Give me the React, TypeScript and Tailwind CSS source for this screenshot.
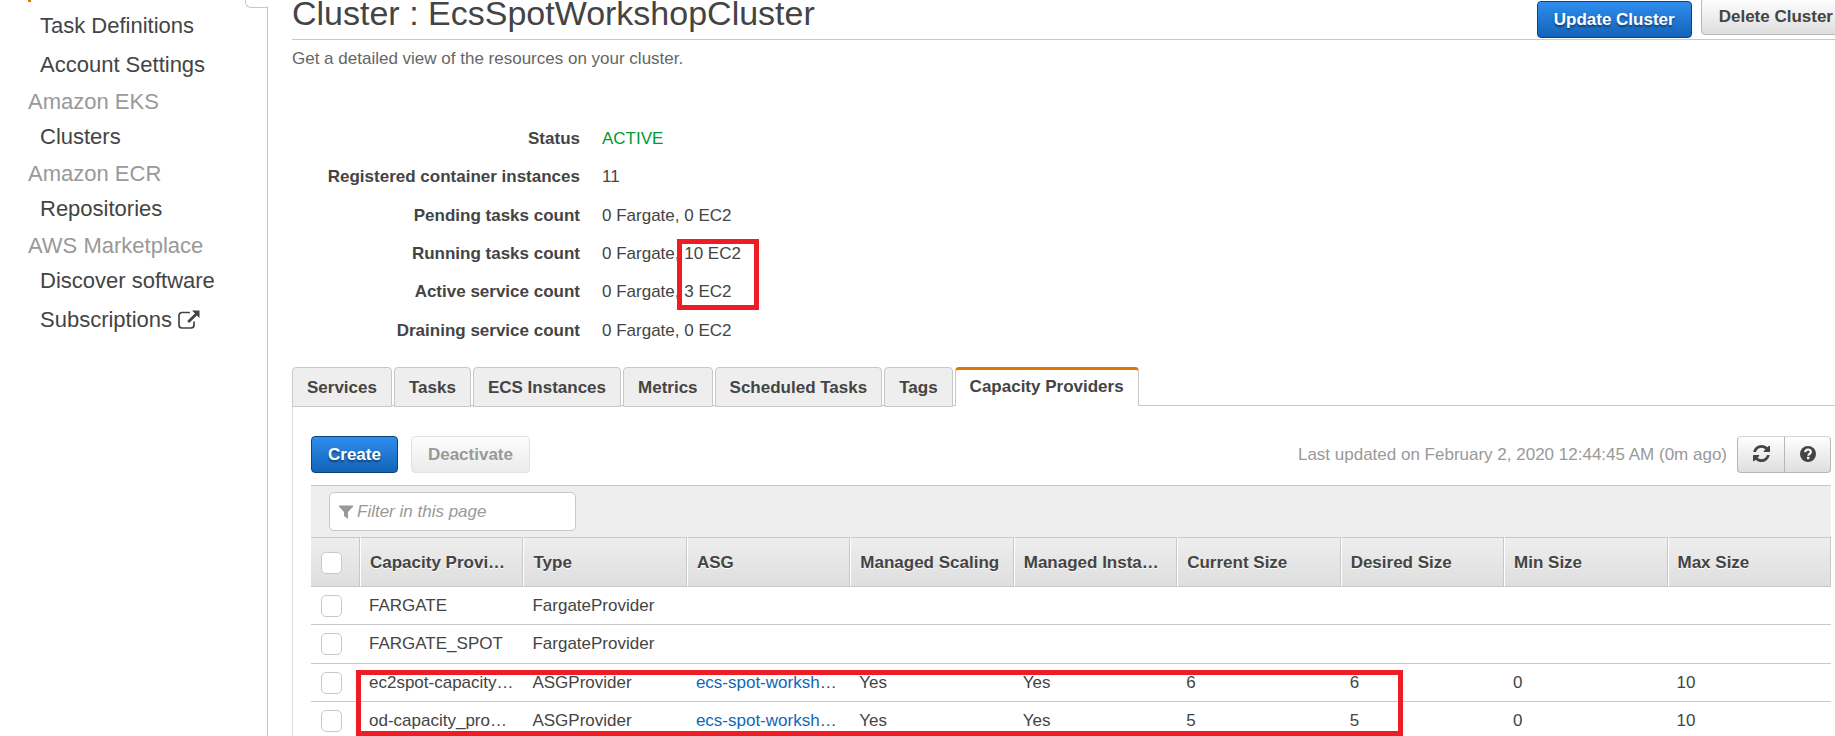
import React from "react";

const primaryButton =
  "h-[37px] rounded-[4px] border border-[#0e4379] bg-linear-to-b from-[#2f8dee] to-[#1264b8] px-4 text-[17px] leading-[20px] font-bold text-white [text-shadow:0_2px_2px_rgba(0,0,0,0.45)]";
const iconButton =
  "flex h-[37px] w-[47px] items-center justify-center border border-[#b7b7b7] border-t-[#d5d5d5] bg-linear-to-b from-white to-[#dedede] pb-[2px] text-[#444]";
const checkbox =
  "block h-[22px] w-[21px] appearance-none rounded-[5px] border border-[#c8c8c8] bg-white checked:bg-[#2f8dee]";

function RefreshIcon() {
  return (
    <svg viewBox="0 128 1536 1536" className="size-[17px]" fill="currentColor" aria-hidden="true">
      <path d="M1511 1056q0 5-1 7-64 268-268 434.500t-478 166.500q-146 0-282.500-55t-243.500-157l-129 129q-19 19-45 19t-45-19-19-45v-448q0-26 19-45t45-19h448q26 0 45 19t19 45-19 45l-137 137q71 66 161 102t187 36q134 0 250-65t186-179q11-17 53-117 8-23 30-23h192q13 0 22.500 9.500t9.500 22.500zm25-800v448q0 26-19 45t-45 19h-448q-26 0-45-19t-19-45 19-45l138-138q-148-137-349-137-134 0-250 65t-186 179q-11 17-53 117-8 23-30 23h-199q-13 0-22.500-9.500t-9.500-22.500v-7q65-268 270-434.500t480-166.500q146 0 284 55.500t245 156.500l130-129q19-19 45-19t45 19 19 45z" />
    </svg>
  );
}

function HelpIcon() {
  return (
    <svg viewBox="0 0 16 16" className="size-4" aria-hidden="true">
      <circle cx="8" cy="8" r="8" fill="currentColor" />
      <path d="M5.200 6.200C5.400 4.300 6.600 3.500 8 3.500c1.600 0 2.800.9 2.800 2.400 0 1.900-2.300 1.900-2.500 3.800" fill="none" stroke="#fff" strokeWidth="2.200" />
      <rect x="7" y="10.800" width="2.400" height="2.300" fill="#fff" />
    </svg>
  );
}

function FilterIcon() {
  return (
    <svg viewBox="0 0 14 14" className="h-[14px] w-[14px] shrink-0" fill="#999" aria-hidden="true">
      <path d="M0 0.500h14v1.200L9 7v7L5 11V7L0 1.700z" />
    </svg>
  );
}

function ExternalIcon() {
  return (
    <svg viewBox="0 0 22 19" className="h-[19px] w-[22px]" aria-hidden="true">
      <path d="M12 2.500H4A3 3 0 0 0 1 5.500V15a3 3 0 0 0 3 3h9a3 3 0 0 0 3-3v-3.500" fill="none" stroke="#444" strokeWidth="1.700" />
      <path d="M14 .5h7.500V8l-2.600-2.600-7.700 7.700-2-2 7.700-7.700z" fill="#444" />
    </svg>
  );
}

function NavLink({ children }: { children: React.ReactNode }) {
  return (
    <a href="#" className="flex h-[39px] items-center gap-[6px] pl-3">
      {children}
    </a>
  );
}

function NavHeading({ children }: { children: React.ReactNode }) {
  return <h2 className="flex h-[33px] items-center pt-[3px] text-[#999]">{children}</h2>;
}

const details = [
  ["Status", "ACTIVE"],
  ["Registered container instances", "11"],
  ["Pending tasks count", "0 Fargate, 0 EC2"],
  ["Running tasks count", "0 Fargate, 10 EC2"],
  ["Active service count", "0 Fargate, 3 EC2"],
  ["Draining service count", "0 Fargate, 0 EC2"],
];

const tabs = ["Services", "Tasks", "ECS Instances", "Metrics", "Scheduled Tasks", "Tags", "Capacity Providers"];

const columns = [
  "Capacity Provider",
  "Type",
  "ASG",
  "Managed Scaling",
  "Managed Instance Protection",
  "Current Size",
  "Desired Size",
  "Min Size",
  "Max Size",
];

const rows = [
  ["FARGATE", "FargateProvider", "", "", "", "", "", "", ""],
  ["FARGATE_SPOT", "FargateProvider", "", "", "", "", "", "", ""],
  ["ec2spot-capacity_provider", "ASGProvider", "ecs-spot-workshop-asg-spot", "Yes", "Yes", "6", "6", "0", "10"],
  ["od-capacity_provider", "ASGProvider", "ecs-spot-workshop-asg-od", "Yes", "Yes", "5", "5", "0", "10"],
];

export default function App() {
  return (
    <div className="flex h-screen overflow-hidden bg-white font-['Liberation_Sans',Arial,sans-serif] text-[17px] leading-[20px] text-[#444]">
      <aside className="w-[268px] shrink-0">
        <div className="flex h-[7px] items-start justify-between pl-7">
          <span className="h-[2px] w-[3px] bg-[#e07700]" />
          <span className="h-[8px] w-[23px] rounded-bl-[6px] border-b border-l border-[#c8c8c8]" />
        </div>
        <nav className="h-full border-r border-[#c8c8c8] pl-7 text-[22px] leading-[26px]">
          <div className="-mt-px">
            <NavLink>Task Definitions</NavLink>
            <NavLink>Account Settings</NavLink>
            <NavHeading>Amazon EKS</NavHeading>
            <NavLink>Clusters</NavLink>
            <NavHeading>Amazon ECR</NavHeading>
            <NavLink>Repositories</NavLink>
            <NavHeading>AWS Marketplace</NavHeading>
            <NavLink>Discover software</NavLink>
            <NavLink>
              Subscriptions <ExternalIcon />
            </NavLink>
          </div>
        </nav>
      </aside>

      <main className="min-w-0 flex-1 pl-6">
        <header className="flex h-10 items-start justify-between border-b border-[#c8c8c8]">
          <h1 className="-mt-[6px] text-[34px] leading-[38px]">Cluster : EcsSpotWorkshopCluster</h1>
          <div className="-mr-4 flex items-start gap-[9px] pt-px">
            <button className={primaryButton}>Update Cluster</button>
            <button className="-mt-[3px] h-[37px] rounded-[4px] border border-[#b7b7b7] bg-linear-to-b from-white to-[#dedede] px-[17px] font-bold">
              Delete Cluster
            </button>
          </div>
        </header>
        <p className="mt-[9px] text-[#666]">Get a detailed view of the resources on your cluster.</p>

        <div className="relative mt-[51px]">
          <dl className="grid h-[230px] auto-rows-fr">
            {details.map(([label, value]) => (
              <div key={label} className="grid grid-cols-[288px_1fr] items-center gap-x-[22px]">
                <dt className="text-right font-bold">{label}</dt>
                <dd className={value === "ACTIVE" ? "text-[#093]" : ""}>{value}</dd>
              </div>
            ))}
          </dl>
          <div className="pointer-events-none absolute top-[119px] left-[385px] h-[71px] w-[82px] border-5 border-[#ee1c25]" />
        </div>

        <div className="mt-[17px] flex h-[39px] items-start gap-[2px] border-b border-[#c8c8c8]" role="tablist">
          {tabs.map((tab) =>
            tab === "Capacity Providers" ? (
              <button key={tab} role="tab" aria-selected="true" className="h-[39px] rounded-t-[4px] border-x border-t-3 border-x-[#c8c8c8] border-t-[#e07700] bg-white px-[14px] pb-[2px] font-bold">
                {tab}
              </button>
            ) : (
              <button key={tab} role="tab" aria-selected="false" className="h-10 rounded-t-[4px] border border-[#c8c8c8] bg-[#eee] px-[14px] pt-[2px] font-bold">
                {tab}
              </button>
            ),
          )}
        </div>

        <section className="border-l border-[#dcdcdc] pt-[30px] pr-1 pl-[18px]">
          <div className="flex items-center">
            <button className={primaryButton}>Create</button>
            <button disabled className="ml-[13px] h-[37px] rounded-[4px] border border-[#e2e2e2] bg-linear-to-b from-[#fdfdfd] to-[#ebebeb] px-4 font-bold text-[#999]">
              Deactivate
            </button>
            <span className="ml-auto text-[#999]">Last updated on February 2, 2020 12:44:45 AM (0m ago)</span>
            <div className="ml-[10px] flex">
              <button aria-label="Refresh" className={`${iconButton} rounded-l-[4px] border-r-0`}>
                <RefreshIcon />
              </button>
              <button aria-label="Help" className={`${iconButton} rounded-r-[4px]`}>
                <HelpIcon />
              </button>
            </div>
          </div>

          <div className="relative mt-3">
            <div className="flex h-[52px] items-center border-t border-[#c8c8c8] bg-[#eee] pl-[18px]">
              <label className="flex h-[39px] w-[247px] items-center gap-1 rounded-[5px] border border-[#c8c8c8] bg-white pr-2 pl-[9px]">
                <FilterIcon />
                <input aria-label="Filter in this page" placeholder="Filter in this page" className="w-full min-w-0 italic outline-none placeholder:text-[#999]" />
              </label>
            </div>
            <table className="w-full table-fixed border-separate border-spacing-0 text-left">
              <thead>
                <tr className="h-[50px] bg-linear-to-b from-[#eee] to-[#dedede] [text-shadow:0_1px_0_#fff]">
                  <th className="w-[49px] border-y border-r border-[#c8c8c8] pt-[2px] pl-[10px]">
                    <input type="checkbox" aria-label="Select all" className={checkbox} />
                  </th>
                  {columns.map((column) => (
                    <th key={column} className="truncate border-y border-r border-l border-[#c8c8c8] border-l-white pt-[2px] pr-2 pl-[9px]">
                      {column}
                    </th>
                  ))}
                </tr>
              </thead>
              <tbody>
                {rows.map((row) => (
                  <tr key={row[0]} className="h-[38px] even:h-[39px]">
                    <td className="border-b border-[#c8c8c8] pl-[10px]">
                      <input type="checkbox" aria-label={`Select ${row[0]}`} className={checkbox} />
                    </td>
                    {row.map((cell, index) => (
                      <td key={columns[index]} className="truncate border-b border-[#c8c8c8] pr-[9px] pl-[9px]">
                        {index === 2 && cell ? (
                          <a href="#" className="text-[#1166bb]">
                            {cell}
                          </a>
                        ) : (
                          cell
                        )}
                      </td>
                    ))}
                  </tr>
                ))}
              </tbody>
            </table>
            <div className="pointer-events-none absolute top-[185px] left-[45px] h-[66px] w-[1047px] border-5 border-[#ee1c25]" />
          </div>
        </section>
      </main>
    </div>
  );
}
